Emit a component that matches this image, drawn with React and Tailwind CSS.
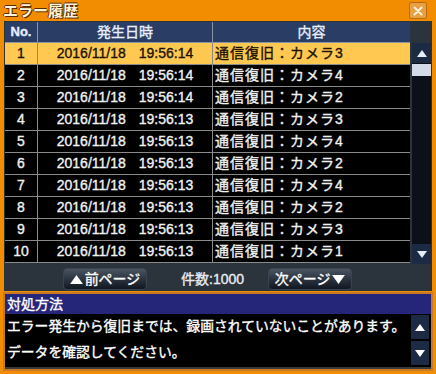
import React from 'react';

const rows = [
  ['1', '2016/11/18', '19:56:14', '通信復旧：カメラ3'],
  ['2', '2016/11/18', '19:56:14', '通信復旧：カメラ4'],
  ['3', '2016/11/18', '19:56:14', '通信復旧：カメラ2'],
  ['4', '2016/11/18', '19:56:13', '通信復旧：カメラ3'],
  ['5', '2016/11/18', '19:56:13', '通信復旧：カメラ4'],
  ['6', '2016/11/18', '19:56:13', '通信復旧：カメラ2'],
  ['7', '2016/11/18', '19:56:13', '通信復旧：カメラ4'],
  ['8', '2016/11/18', '19:56:13', '通信復旧：カメラ2'],
  ['9', '2016/11/18', '19:56:13', '通信復旧：カメラ3'],
  ['10', '2016/11/18', '19:56:13', '通信復旧：カメラ1'],
];

const font = { fontFamily: '"Liberation Sans", "Noto Sans CJK JP", sans-serif' };

function Up({ className = '', w = 10, h = 7 }) {
  return (
    <svg width={w} height={h} viewBox="0 0 10 7" className={className}>
      <polygon points="5,0 10,7 0,7" fill="currentColor" />
    </svg>
  );
}

function Down({ className = '', w = 10, h = 7 }) {
  return (
    <svg width={w} height={h} viewBox="0 0 10 7" className={className}>
      <polygon points="0,0 10,0 5,7" fill="currentColor" />
    </svg>
  );
}

export default function App() {
  return (
    <div className="w-[436px] h-[374px] bg-[#f28c00] flex flex-col overflow-hidden text-white [-webkit-text-stroke:0.35px_currentColor]" style={font}>
      {/* Title bar */}
      <div className="h-[21px] flex items-center justify-between pl-[3px] pr-[9px]">
        <span className="text-[15px] font-bold leading-none text-[#fff4d8] [-webkit-text-stroke:0px] [text-shadow:1px_1px_0_#5a2a00,-1px_0_0_#5a2a00,0_-1px_0_#5a2a00]">エラー履歴</span>
        <div className="w-[18px] h-[17px] rounded-[2px] bg-[#e8a040] border border-[#b86a10] flex items-center justify-center">
          <svg width="10" height="10" viewBox="0 0 10 10">
            <path d="M1.5 1.5 L8.5 8.5 M8.5 1.5 L1.5 8.5" stroke="#fff3dc" strokeWidth="2" strokeLinecap="round" />
          </svg>
        </div>
      </div>

      {/* Main panel */}
      <div className="mx-[4px] bg-[#2b333d] flex flex-col h-[270px]">
        <div className="flex pl-[1px] pt-[1px]">
          <div className="w-[405px] flex flex-col">
            <div className="flex h-[21px] bg-[#2a3d64] text-[14px] text-[#e8eefc] border-b border-[#8a93a4]">
              <div className="w-[33px] flex items-center justify-center font-bold border-r border-[#8a93a4] text-[13px]">No.</div>
              <div className="w-[175px] flex items-center justify-center border-r border-[#8a93a4]">発生日時</div>
              <div className="flex-1 flex items-center justify-center">内容</div>
            </div>
            {rows.map((r, i) => {
              const sel = i === 0;
              return (
                <div
                  key={r[0]}
                  className={`flex h-[22px] text-[14px] border-b border-[#8a8a8a] ${sel ? 'bg-[#ffc850] text-[#1a1208]' : 'bg-black text-[#f2f2f2]'}`}
                >
                  <div className="w-[33px] flex items-center justify-center border-r border-[#8a8a8a]">{r[0]}</div>
                  <div className="w-[175px] flex items-center justify-center gap-[13px] border-r border-[#8a8a8a]">
                    <span>{r[1]}</span>
                    <span>{r[2]}</span>
                  </div>
                  <div className="flex-1 flex items-center pl-[2px] tracking-[1px]">{r[3]}</div>
                </div>
              );
            })}
          </div>
          {/* Scrollbar */}
          <div className="ml-[2px] mt-[21px] w-[19px] h-[221px] bg-[#0c1018] flex flex-col justify-between">
            <div>
              <div className="h-[20px] bg-[#1c2a44] flex items-center justify-center text-[#e8eef8]"><Up /></div>
              <div className="h-[12px] mt-[1px] bg-[#d3dbe8]"></div>
            </div>
            <div className="h-[20px] bg-[#1c2a44] flex items-center justify-center text-[#e8eef8]"><Down /></div>
          </div>
        </div>

        {/* Pagination */}
        <div className="flex items-center mt-[4px] text-[14px]">
          <div className="ml-[59px] w-[84px] h-[22px] rounded-[4px] bg-gradient-to-b from-[#4a5462] to-[#121822] border border-[#3a4350] flex items-center justify-center gap-[2px]">
            <Up className="text-white" w={13} h={9} />
            <span>前ページ</span>
          </div>
          <span className="ml-[34px] text-[#e8ecf2]">件数:1000</span>
          <div className="ml-[24px] w-[84px] h-[22px] rounded-[4px] bg-gradient-to-b from-[#4a5462] to-[#121822] border border-[#3a4350] flex items-center justify-center gap-[2px]">
            <span>次ページ</span>
            <Down className="text-white" w={13} h={9} />
          </div>
        </div>
      </div>

      {/* Bottom help */}
      <div className="mx-[3px] mt-[1px] h-[79px] border-2 border-[#c67a24] bg-black flex flex-col">
        <div className="h-[20px] bg-[#25267a] flex items-center pl-[2px] text-[14px]">対処方法</div>
        <div className="flex flex-1">
          <div className="flex-1 text-[13.8px] pl-[2px] leading-[26px] whitespace-nowrap">
            <div>エラー発生から復旧までは、録画されていないことがあります。</div>
            <div>データを確認してください。</div>
          </div>
          <div className="w-[20px] flex flex-col gap-[2px] pt-[1px] pr-[2px]">
            <div className="h-[24px] bg-[#1c2a44] flex items-center justify-center text-white"><Up /></div>
            <div className="h-[24px] bg-[#1c2a44] flex items-center justify-center text-white"><Down /></div>
          </div>
        </div>
        <div className="h-[2px] bg-[#3a3a3a]"></div>
      </div>
    </div>
  );
}
